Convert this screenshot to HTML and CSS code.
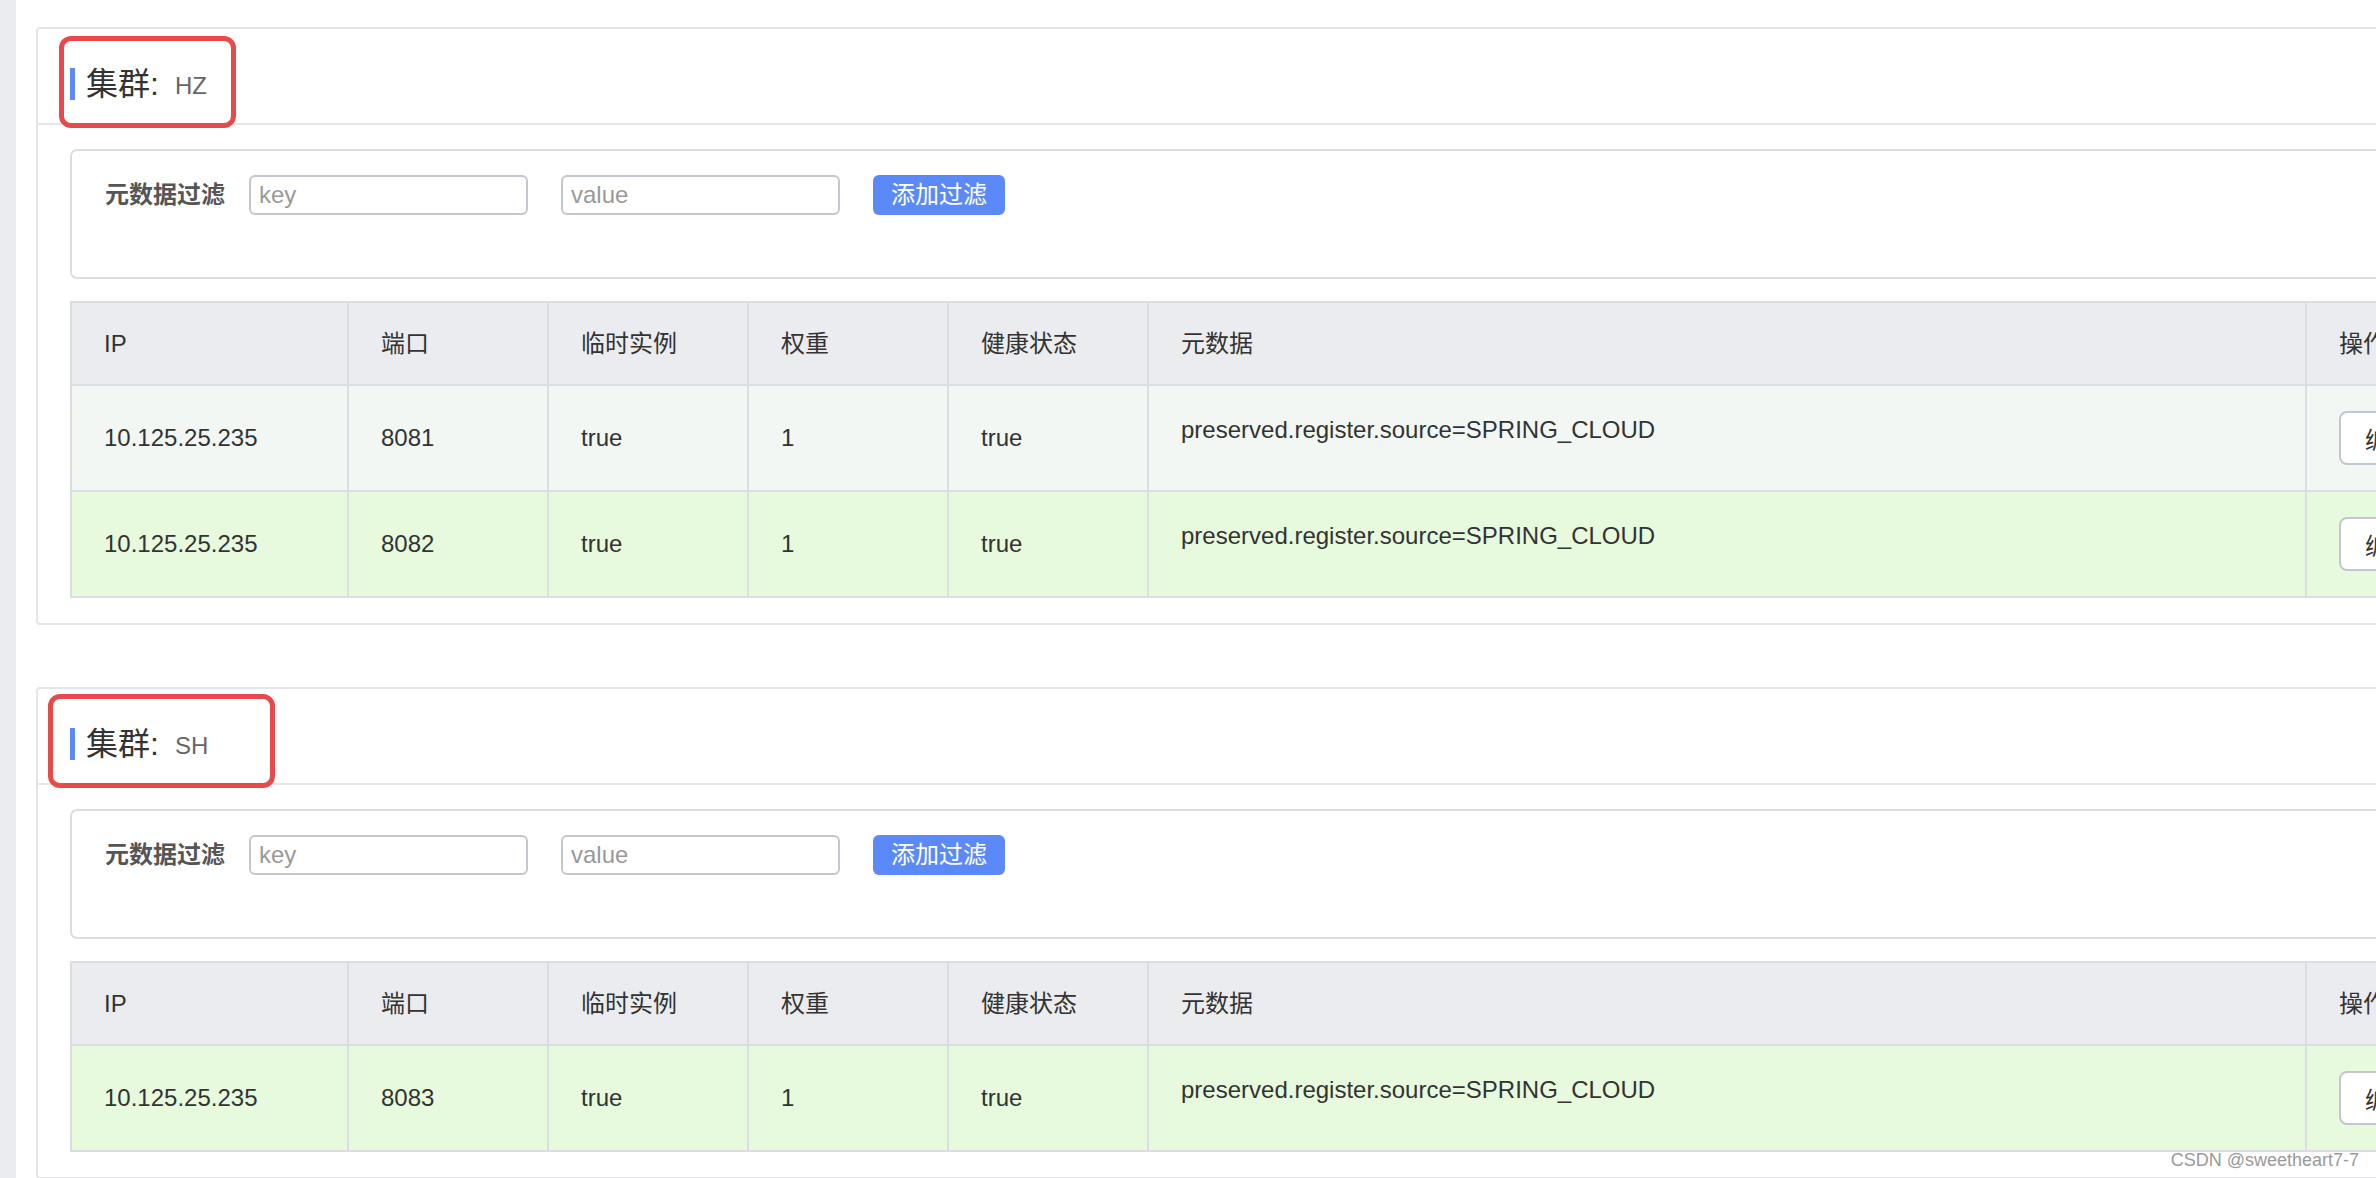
FILE: index.html
```html
<!DOCTYPE html>
<html lang="zh-CN">
<head>
<meta charset="utf-8">
<title>集群</title>
<link rel="stylesheet" href="styles.css">
</head>
<body>
<div class="layout">
  <div class="strip"></div>
  <main class="main">
    <section class="card">
      <div class="mark mark-hz"></div>
      <div class="card-header">
        <div class="title"><span class="bar"></span><span class="title-text">集群:</span><span class="cluster-name">HZ</span></div>
      </div>
      <div class="card-body">
        <div class="filter">
          <span class="filter-label">元数据过滤</span>
          <input class="filter-input" placeholder="key">
          <input class="filter-input" placeholder="value">
          <button class="btn-primary">添加过滤</button>
        </div>
        <table class="grid">
          <colgroup>
            <col class="c-ip"><col class="c-n"><col class="c-n"><col class="c-n"><col class="c-n"><col class="c-meta"><col class="c-op">
          </colgroup>
          <thead>
            <tr><th>IP</th><th>端口</th><th>临时实例</th><th>权重</th><th>健康状态</th><th>元数据</th><th>操作</th></tr>
          </thead>
          <tbody>
            <tr class="row-a"><td>10.125.25.235</td><td>8081</td><td>true</td><td>1</td><td>true</td><td><div class="meta-text">preserved.register.source=SPRING_CLOUD</div></td><td><button class="btn-normal">编辑</button></td></tr>
            <tr class="row-b"><td>10.125.25.235</td><td>8082</td><td>true</td><td>1</td><td>true</td><td><div class="meta-text">preserved.register.source=SPRING_CLOUD</div></td><td><button class="btn-normal">编辑</button></td></tr>
          </tbody>
        </table>
      </div>
    </section>

    <section class="card card-second">
      <div class="mark mark-sh"></div>
      <div class="card-header">
        <div class="title"><span class="bar"></span><span class="title-text">集群:</span><span class="cluster-name">SH</span></div>
      </div>
      <div class="card-body">
        <div class="filter">
          <span class="filter-label">元数据过滤</span>
          <input class="filter-input" placeholder="key">
          <input class="filter-input" placeholder="value">
          <button class="btn-primary">添加过滤</button>
        </div>
        <table class="grid">
          <colgroup>
            <col class="c-ip"><col class="c-n"><col class="c-n"><col class="c-n"><col class="c-n"><col class="c-meta"><col class="c-op">
          </colgroup>
          <thead>
            <tr><th>IP</th><th>端口</th><th>临时实例</th><th>权重</th><th>健康状态</th><th>元数据</th><th>操作</th></tr>
          </thead>
          <tbody>
            <tr class="row-b"><td>10.125.25.235</td><td>8083</td><td>true</td><td>1</td><td>true</td><td><div class="meta-text">preserved.register.source=SPRING_CLOUD</div></td><td><button class="btn-normal">编辑</button></td></tr>
          </tbody>
        </table>
      </div>
    </section>
  </main>
</div>
<div class="watermark">CSDN @sweetheart7-7</div>
</body>
</html>
```
FILE: styles.css
```css
html, body {
  margin: 0;
  padding: 0;
  width: 2376px;
  height: 1178px;
  overflow: hidden;
  background: #ffffff;
  font-family: "Liberation Sans", "Noto Sans CJK SC", sans-serif;
  color: #333333;
}

.layout {
  display: flex;
  height: 1178px;
}

.strip {
  flex: 0 0 16px;
  background: #ebecf0;
}

.main {
  flex: 0 0 auto;
  padding: 27px 0 0 20px;
}

.card {
  position: relative;
  width: 2500px;
  box-sizing: border-box;
  border: 2px solid #e4e5ea;
  border-radius: 4px;
  background: #ffffff;
}

.card-second {
  margin-top: 62px;
}

.card-header {
  height: 94px;
  box-sizing: content-box;
  border-bottom: 2px solid #e6e7eb;
  padding: 0 32px;
}

.title {
  display: flex;
  align-items: center;
  height: 32px;
  padding-top: 39px;
}

.bar {
  width: 5px;
  height: 32px;
  background: #5b8af8;
  margin-right: 11px;
}

.title-text {
  font-size: 32px;
  line-height: 32px;
  color: #333333;
}

.cluster-name {
  font-size: 24px;
  line-height: 32px;
  color: #666666;
  margin-left: 16px;
  padding-top: 3px;
}

.card-body {
  padding: 24px 32px 25px 32px;
}

.filter {
  height: 130px;
  box-sizing: border-box;
  border: 2px solid #dcdde2;
  border-radius: 7px;
  padding: 24px 0 0 33px;
  display: flex;
  align-items: flex-start;
}

.filter-label {
  font-size: 24px;
  line-height: 40px;
  font-weight: bold;
  color: #555555;
  margin-right: 24px;
}

.filter-input {
  width: 279px;
  height: 40px;
  box-sizing: border-box;
  border: 2px solid #c4c6cf;
  border-radius: 6px;
  padding: 0 8px;
  font-family: "Liberation Sans", "Noto Sans CJK SC", sans-serif;
  font-size: 24px;
  color: #333333;
  margin: 0 33px 0 0;
  outline: none;
  background: #ffffff;
}

.filter-input::placeholder {
  color: #999999;
}

.btn-primary {
  height: 40px;
  box-sizing: border-box;
  border: none;
  border-radius: 6px;
  background: #5b8af8;
  color: #ffffff;
  font-family: "Liberation Sans", "Noto Sans CJK SC", sans-serif;
  font-size: 24px;
  line-height: 40px;
  padding: 0 18px;
  width: 132px;
}

.grid {
  margin-top: 22px;
  width: 100%;
  table-layout: fixed;
  border-collapse: separate;
  border-spacing: 0;
  border-top: 2px solid #dcdde2;
  border-left: 2px solid #dcdde2;
  font-size: 24px;
}

.c-ip { width: 277px; }
.c-n { width: 200px; }
.c-meta { width: 1158px; }
.c-op { width: auto; }

.grid th,
.grid td {
  border-right: 2px solid #dcdde2;
  border-bottom: 2px solid #dcdde2;
  padding: 0 30px 0 32px;
  text-align: left;
  vertical-align: middle;
  white-space: nowrap;
  overflow: hidden;
  color: #333333;
  font-weight: normal;
  line-height: 30px;
}

.grid th {
  height: 83px;
  box-sizing: border-box;
  background: #ebecf0;
}

.grid td {
  height: 106px;
  box-sizing: border-box;
}

.row-a td {
  background: #f2f7f3;
}

.row-b td {
  background: #e7fadd;
}

.meta-text {
  margin-bottom: 16px;
}

.btn-normal {
  height: 54px;
  box-sizing: border-box;
  border: 2px solid #c4c6cf;
  border-radius: 8px;
  background: #ffffff;
  color: #333333;
  font-family: "Liberation Sans", "Noto Sans CJK SC", sans-serif;
  font-size: 24px;
  padding: 0 24px;
}

.mark {
  position: absolute;
  box-sizing: border-box;
  border: 5px solid #e8494b;
  border-radius: 12px;
  pointer-events: none;
}

.mark-hz {
  left: 21px;
  top: 7px;
  width: 177px;
  height: 92px;
}

.mark-sh {
  left: 10px;
  top: 5px;
  width: 227px;
  height: 94px;
}

.watermark {
  position: absolute;
  right: 17px;
  top: 1150px;
  font-family: "Liberation Sans", sans-serif;
  font-size: 18px;
  line-height: 20px;
  color: #9a9a9a;
}
```
